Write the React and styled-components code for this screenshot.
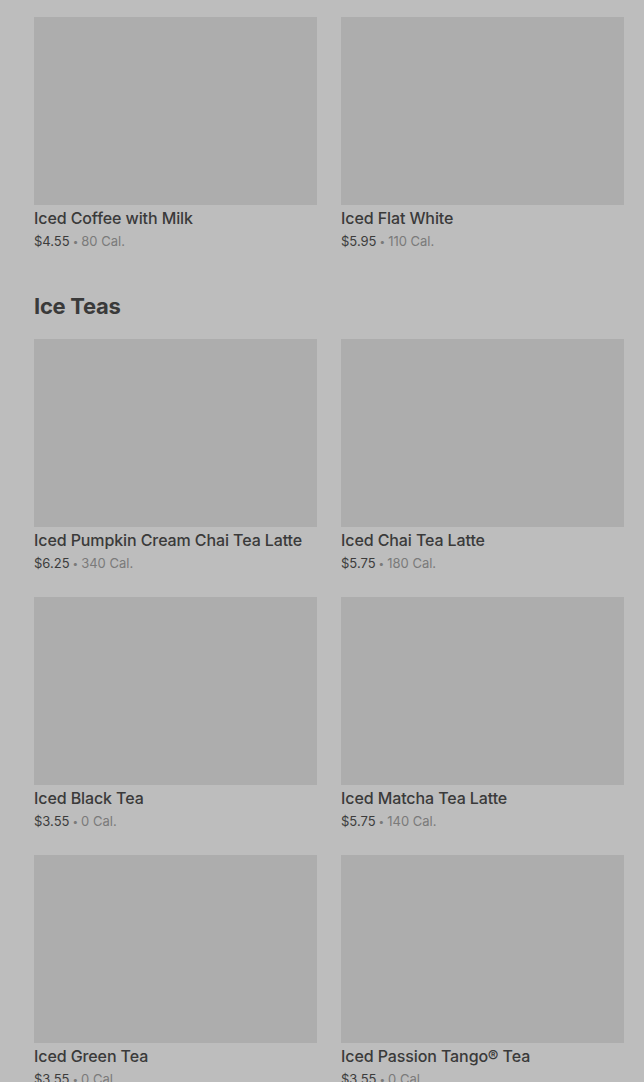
import styled, { createGlobalStyle } from "styled-components";

const GlobalStyle = createGlobalStyle`
  html, body {
    margin: 0;
    padding: 0;
    background: #bdbdbd;
  }
  body {
    font-family: Inter, "Noto Sans", sans-serif;
    color: #383838;
    overflow: hidden;
  }
`;

const coffees = [
  { name: "Iced Coffee with Milk", price: "$4.55", cal: "80 Cal." },
  { name: "Iced Flat White", price: "$5.95", cal: "110 Cal." },
];

const teas = [
  { name: "Iced Pumpkin Cream Chai Tea Latte", price: "$6.25", cal: "340 Cal." },
  { name: "Iced Chai Tea Latte", price: "$5.75", cal: "180 Cal." },
  { name: "Iced Black Tea", price: "$3.55", cal: "0 Cal." },
  { name: "Iced Matcha Tea Latte", price: "$5.75", cal: "140 Cal." },
  { name: "Iced Green Tea", price: "$3.55", cal: "0 Cal." },
  { name: "Iced Passion Tango® Tea", price: "$3.55", cal: "0 Cal." },
];

function Product({ item }) {
  return (
    <Card>
      <Thumb />
      <Name>{item.name}</Name>
      <Meta>
        <Price>{item.price}</Price>
        <Dot>•</Dot>
        <Cal>{item.cal}</Cal>
      </Meta>
    </Card>
  );
}

function App() {
  return (
    <Page>
      <GlobalStyle />
      <Grid>
        {coffees.map((c) => (
          <Product key={c.name} item={c} />
        ))}
      </Grid>
      <Heading>Ice Teas</Heading>
      <Grid>
        {teas.map((t) => (
          <Product key={t.name} item={t} />
        ))}
      </Grid>
    </Page>
  );
}

const Page = styled.main`
  padding: 17px 20px 40px 34px;
`;

const Grid = styled.div`
  display: grid;
  grid-template-columns: 283px 283px;
  column-gap: 24px;
  row-gap: 24px;
`;

const Card = styled.div`
  display: flex;
  flex-direction: column;
`;

const Thumb = styled.div`
  height: 188px;
  background: #adadad;
`;

const Name = styled.div`
  padding-top: 1px;
  font-size: 16px;
  font-weight: 500;
  line-height: 24px;
  letter-spacing: -0.1px;
  color: #3a3a3a;
  white-space: nowrap;
`;

const Meta = styled.div`
  display: flex;
  align-items: center;
  gap: 3px;
  margin-top: 1px;
  font-size: 13px;
  line-height: 20px;
`;

const Price = styled.span`
  color: #3c3c3c;
`;

const Dot = styled.span`
  color: #7a7a7a;
  font-size: 10px;
`;

const Cal = styled.span`
  color: #7a7a7a;
`;

const Heading = styled.h2`
  margin: 41px 0 19px;
  font-size: 22px;
  line-height: 28px;
  font-weight: 700;
  letter-spacing: -0.3px;
  color: #3a3a3a;
`;

export default App;
